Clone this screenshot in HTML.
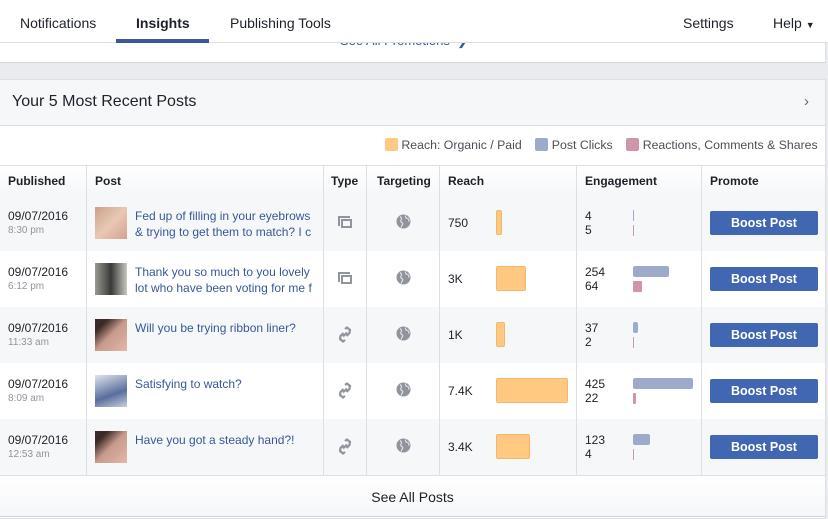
<!DOCTYPE html>
<html><head><meta charset="utf-8"><style>
*{box-sizing:border-box;margin:0;padding:0}
body{width:828px;height:519px;overflow:hidden;background:#e9ebee;font-family:"Liberation Sans",Arial,sans-serif;position:relative;color:#1d2129}
.abs{position:absolute}
.nav{left:0;top:0;width:828px;height:43px;background:#fff;border-bottom:1px solid #dddfe2;z-index:3}
.nav span{position:absolute;top:15px;font-size:14px;color:#1d2129}
.card1{left:0;top:30px;width:826px;height:33px;background:#fff;border-bottom:1px solid #d3d6db;border-right:1px solid #dddfe2}
.card{left:0;top:79px;width:826px;height:440px;background:#fff;border:1px solid #dddfe2;border-left:0}
.title{left:0;top:0;width:825px;height:46px;background:#f6f7f9;border-bottom:1px solid #dddfe2}
.row{position:absolute;left:0;width:825px;height:56px}
.cell{position:absolute;top:0;height:100%;border-left:1px solid #dddfe2}
.date{position:absolute;left:8px;top:14px;font-size:12px;color:#1d2129}
.time{position:absolute;left:8px;top:30px;font-size:10px;color:#90949c}
.thumb{position:absolute;left:95px;top:12px;width:32px;height:32px}
.ptxt{position:absolute;left:135px;top:13px;font-size:12px;line-height:16px;color:#365899;width:178px;white-space:nowrap;overflow:hidden}
.num{position:absolute;font-size:12px;color:#1d2129}
.rb{position:absolute;left:496px;top:15px;height:25px;background:#ffc982;border:1px solid #f5b767;border-radius:2px}
.cb{position:absolute;left:633px;top:15px;height:11px;background:#9cabca;border-radius:2px}
.eb{position:absolute;left:633px;top:30px;height:11px;background:#d095a7;border-radius:1px}
.btn{position:absolute;left:710px;top:16px;width:108px;height:24px;background:#4267b2;border-radius:2px;color:#fff;font-weight:bold;font-size:12.5px;text-align:center;line-height:24px}
.hd{position:absolute;top:8px;font-size:12px;font-weight:bold}
</style></head><body>
<div class="abs nav">
<span style="left:20px">Notifications</span>
<span style="left:136px;font-weight:bold">Insights</span>
<div class="abs" style="left:116px;top:39px;width:93px;height:4px;background:#3b5998"></div>
<span style="left:230px">Publishing Tools</span>
<span style="left:683px">Settings</span>
<span style="left:773px">Help <span style="position:static;font-size:9px">▼</span></span>
</div>
<div class="abs card1"><div class="abs" style="left:340px;top:3px;font-size:13px;color:#365899">See All Promotions &nbsp;❯</div></div>
<div class="abs card">
<div class="abs title"><div class="abs" style="left:12px;top:13px;font-size:16px">Your 5 Most Recent Posts</div><div class="abs" style="left:804px;top:13px;font-size:15px;color:#606770">›</div></div>
<div class="abs" style="top:58px;left:385px;font-size:12.3px;color:#4b4f56;white-space:nowrap">
<span style="display:inline-block;width:13px;height:13px;background:#ffc982;border-radius:2px;vertical-align:-2px"></span> Reach: Organic / Paid &nbsp;&nbsp;
<span style="display:inline-block;width:13px;height:13px;background:#9cabca;border-radius:2px;vertical-align:-2px"></span> Post Clicks &nbsp;&nbsp;
<span style="display:inline-block;width:13px;height:13px;background:#d095a7;border-radius:2px;vertical-align:-2px"></span> Reactions, Comments &amp; Shares</div>
<div class="row" style="top:85px;height:31px;background:linear-gradient(#fff,#f6f7f9);border-top:1px solid #dddfe2;border-bottom:1px solid #ccd0d5">
<div class="hd" style="left:8px">Published</div><div class="cell" style="left:86px"></div><div class="hd" style="left:95px">Post</div>
<div class="cell" style="left:323px"></div><div class="hd" style="left:331px">Type</div>
<div class="cell" style="left:366px"></div><div class="hd" style="left:377px">Targeting</div>
<div class="cell" style="left:439px"></div><div class="hd" style="left:448px">Reach</div>
<div class="cell" style="left:576px"></div><div class="hd" style="left:585px">Engagement</div>
<div class="cell" style="left:701px"></div><div class="hd" style="left:710px">Promote</div>
</div>
</div>
<div id="rows"></div>
<div class="abs" style="left:0;top:475px;width:825px;height:42px;background:linear-gradient(#fff,#f6f7f9);border-top:1px solid #dddfe2;border-bottom:1px solid #ccd0d5;text-align:center;font-size:14px;line-height:42px;color:#1d2129">See All Posts</div>
<script>
var d=[["8:30 pm","Fed up of filling in your eyebrows<br>& trying to get them to match? I c","a","750",6,"4","5",1,1,"linear-gradient(135deg,#c9a08a,#e8c9b4 50%,#d8a090)"],
["6:12 pm","Thank you so much to you lovely<br>lot who have been voting for me f","a","3K",30,"254","64",36,9,"linear-gradient(90deg,#9a9a92,#3a3a3a 50%,#c8c8c0)"],
["11:33 am","Will you be trying ribbon liner?","l","1K",9,"37","2",5,1,"linear-gradient(135deg,#3a2a28 20%,#c89a8a 50%,#e0b8a8)"],
["8:09 am","Satisfying to watch?","l","7.4K",72,"425","22",60,3,"linear-gradient(160deg,#dfe4ee,#5a6e9c 60%,#c8d0e0)"],
["12:53 am","Have you got a steady hand?!","l","3.4K",34,"123","4",17,1,"linear-gradient(135deg,#3a2a28 20%,#c89a8a 50%,#e0b8a8)"]];
var h="";
var typeA='<svg class="abs" style="left:337px;top:20px" width="16" height="14" viewBox="0 0 16 14"><path d="M1 1h12v2H3v8H1z M4 4h11v9H4z M6 6v5h7V6z" fill="#90949c" fill-rule="evenodd"/></svg>';
var typeL='<svg class="abs" style="left:337px;top:19px" width="16" height="17" viewBox="0 0 16 17"><g fill="none" stroke="#90949c" stroke-width="2.2"><path d="M8 3l2-1.5 3 2.5-0.5 3-3 3"/><path d="M8 14l-2 1.5-3-2.5 0.5-3 3-3"/><path d="M6 10.5l4-4"/></g></svg>';
var globe='<svg class="abs" style="left:396px;top:19px" width="15" height="15" viewBox="0 0 15 15"><circle cx="7.5" cy="7.5" r="7" fill="#90949c"/><path d="M4 2.5c1.5 1 2 2 1 3.5s.5 2.5 1.5 3-1 3-1.5 4.5M9.5 1.5c-.5 1.5.5 3 2 3s2 2 1 3" fill="none" stroke="#e4e6ea" stroke-width="1.1"/></svg>';
d.forEach(function(r,i){var t=195+i*56;
h+='<div class="row" style="top:'+t+'px;background:'+(i%2?'#fff':'#f6f7f9')+'">'+
'<div class="date">09/07/2016</div><div class="time">'+r[0]+'</div>'+
'<div class="cell" style="left:86px"></div><div class="thumb" style="background:'+r[9]+'"></div><div class="ptxt">'+r[1]+'</div>'+
'<div class="cell" style="left:323px"></div>'+(r[2]=="a"?typeA:typeL)+
'<div class="cell" style="left:366px"></div>'+globe+
'<div class="cell" style="left:439px"></div><div class="num" style="left:448px;top:21px">'+r[3]+'</div><div class="rb" style="width:'+r[4]+'px"></div>'+
'<div class="cell" style="left:576px"></div><div class="num" style="left:585px;top:14px">'+r[5]+'</div><div class="num" style="left:585px;top:28px">'+r[6]+'</div>'+
'<div class="cb" style="width:'+r[7]+'px"></div><div class="eb" style="width:'+r[8]+'px"></div>'+
'<div class="cell" style="left:701px"></div><div class="btn">Boost Post</div></div>';});
document.getElementById("rows").innerHTML=h;
</script>
</body></html>
